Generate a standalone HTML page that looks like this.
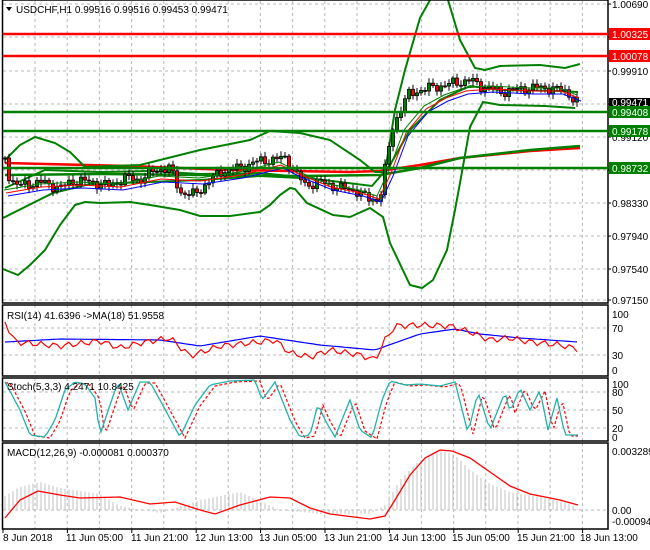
<!DOCTYPE html>
<html><head><meta charset="utf-8"><style>
body{margin:0;background:#fff;width:650px;height:550px;overflow:hidden;font-family:"Liberation Sans",sans-serif;}
svg{position:absolute;left:0;top:0}
text{font-family:"Liberation Sans",sans-serif;font-size:10px;fill:#000}
</style></head><body>
<svg id="s" width="650" height="550" viewBox="0 0 650 550" xmlns="http://www.w3.org/2000/svg">
<rect width="650" height="550" fill="#fff"/>
<g id="grid" stroke="#b8b8b8" stroke-dasharray="3,3" stroke-width="1"></g>
<g id="chart"></g>
<g fill="none" stroke="#000" stroke-width="1.5">
<rect x="2.5" y="0" width="605.5" height="303"/>
<rect x="2.5" y="305" width="605.5" height="71"/>
<rect x="2.5" y="378" width="605.5" height="63"/>
<rect x="2.5" y="443" width="605.5" height="86"/>
</g>
<g stroke-width="2.5">
<line x1="3" y1="34" x2="608" y2="34" stroke="#ff0000"/>
<line x1="3" y1="56" x2="608" y2="56" stroke="#ff0000"/>
<line x1="3" y1="112" x2="608" y2="112" stroke="#008000"/>
<line x1="3" y1="131" x2="608" y2="131" stroke="#008000"/>
<line x1="3" y1="168" x2="608" y2="168" stroke="#008000"/>
</g>
<g id="ticks" stroke="#000"></g>
<text x="612" y="8">1.00690</text>
<text x="612" y="75">0.99910</text>
<text x="612" y="141">0.99120</text>
<text x="612" y="207">0.98330</text>
<text x="612" y="240">0.97940</text>
<text x="612" y="273">0.97540</text>
<text x="612" y="304">0.97150</text>
<rect x="609" y="28" width="41" height="12" fill="#ff0000"/><text x="612" y="38" style="fill:#fff">1.00325</text>
<rect x="609" y="50" width="41" height="12" fill="#ff0000"/><text x="612" y="60" style="fill:#fff">1.00078</text>
<rect x="609" y="98" width="41" height="9" fill="#000"/><text x="612" y="106" style="fill:#fff">0.99471</text>
<rect x="609" y="106" width="41" height="12" fill="#008000"/><text x="612" y="116" style="fill:#fff">0.99408</text>
<rect x="609" y="125" width="41" height="12" fill="#008000"/><text x="612" y="135" style="fill:#fff">0.99178</text>
<rect x="609" y="162" width="41" height="12" fill="#008000"/><text x="612" y="172" style="fill:#fff">0.98732</text>
<text x="612" y="318">100</text><text x="612" y="332">70</text><text x="612" y="359">30</text><text x="612" y="374">0</text>
<text x="612" y="388">100</text><text x="612" y="396">80</text><text x="612" y="414">50</text><text x="612" y="432">20</text><text x="612" y="441">0</text>
<text x="612" y="455">0.003289</text><text x="612" y="514">0.00</text><text x="612" y="525">-0.00094</text>
<g font-size="10">
<text x="3" y="541">8 Jun 2018</text><text x="66" y="541">11 Jun 05:00</text><text x="131" y="541">11 Jun 21:00</text>
<text x="195" y="541">12 Jun 13:00</text><text x="259" y="541">13 Jun 05:00</text><text x="324" y="541">13 Jun 21:00</text>
<text x="388" y="541">14 Jun 13:00</text><text x="452" y="541">15 Jun 05:00</text><text x="517" y="541">15 Jun 21:00</text>
<text x="580" y="541">18 Jun 13:00</text>
</g>
<path d="M6 7 L12 7 L9 11 Z" fill="#000"/>
<text x="16" y="13">USDCHF,H1  0.99516 0.99516 0.99453 0.99471</text>
<text x="7" y="319">RSI(14) 41.6396  -&gt;MA(18) 51.9558</text>
<text x="7" y="390">Stoch(5,3,3) 4.2471 10.8425</text>
<text x="7" y="456">MACD(12,26,9) -0.000081 0.000370</text>
</svg>
<script>
var NS="http://www.w3.org/2000/svg";
function el(p,t,a){var e=document.createElementNS(NS,t);for(var k in a)e.setAttribute(k,a[k]);p.appendChild(e);return e;}
var grid=document.getElementById('grid'),ch=document.getElementById('chart'),tk=document.getElementById('ticks');
for(var x=35;x<608;x+=32.2){[[1,303],[305,376],[378,441],[443,529]].forEach(function(r){el(grid,'line',{x1:x,y1:r[0],x2:x,y2:r[1]});});}
for(var x=3;x<608;x+=64.4){el(tk,'line',{x1:x,y1:529,x2:x,y2:533});}
[4,37,71,104,137,170,203,236,269,300].forEach(function(y){el(grid,'line',{x1:3,y1:y,x2:608,y2:y});el(tk,'line',{x1:608,y1:y,x2:611,y2:y});});
[328,355].forEach(function(y){el(grid,'line',{x1:3,y1:y,x2:608,y2:y});});
[392,410,428].forEach(function(y){el(grid,'line',{x1:3,y1:y,x2:608,y2:y});});
el(grid,'line',{x1:3,y1:510,x2:608,y2:510});
function interp(pts,x){for(var i=0;i<pts.length-1;i++){if(x>=pts[i][0]&&x<=pts[i+1][0]){var t=(x-pts[i][0])/(pts[i+1][0]-pts[i][0]);return pts[i][1]+t*(pts[i+1][1]-pts[i][1]);}}return x<pts[0][0]?pts[0][1]:pts[pts.length-1][1];}
function line(pts,col,w,dash){var d=pts.map(function(p,i){return (i?'L':'M')+p[0].toFixed(1)+' '+p[1].toFixed(1);}).join('');var a={d:d,fill:'none',stroke:col,'stroke-width':w};if(dash)a['stroke-dasharray']=dash;el(ch,'path',a);}
line([[5,163],[130,166],[230,170],[350,172],[380,171],[420,165],[460,158],[530,151],[580,148]],'#ff0000',2.5);
line([[5,175],[100,174],[200,175],[300,176],[380,175],[420,168],[460,158],[530,150],[580,146]],'#008000',2.5);
line([[5,160],[20,145],[35,137],[55,143],[70,152],[85,167],[140,165],[200,150],[250,140],[270,131],[300,133],[330,140],[360,160],[375,172],[385,172],[395,110],[405,70],[420,18],[430,0]],'#008000',2);
line([[448,0],[460,40],[475,68],[485,70],[500,66],[540,65],[565,68],[580,64]],'#008000',2);
line([[3,269],[18,275],[30,265],[45,250],[60,225],[75,205],[85,202],[100,203],[130,202],[150,205],[180,210],[200,216],[230,216],[260,212],[270,205],[280,195],[290,188],[295,189],[307,203],[333,215],[350,217],[370,208],[383,217],[390,243],[410,285],[422,288],[433,280],[447,250],[455,210],[460,183],[470,127],[483,102],[500,105],[545,106],[575,108]],'#008000',2);
line([[3,218],[53,193],[90,184],[150,182],[200,180],[260,176],[300,178]],'#008000',2);
line([[5,188],[45,170],[100,172],[150,171],[200,174],[260,173],[300,177],[340,182],[372,186],[390,165],[410,130],[440,100],[470,86],[500,90],[560,91],[578,92]],'#008000',2);
var P=[[5,158],[10,180],[20,186],[40,182],[60,188],[75,180],[90,182],[110,186],[125,178],[140,180],[155,170],[170,168],[180,192],[195,195],[210,180],[225,170],[240,168],[255,162],[270,160],[285,158],[295,172],[305,185],[320,182],[340,188],[355,190],[370,200],[380,198],[385,170],[392,130],[400,110],[408,95],[420,90],[440,86],[460,82],[470,80],[480,86],[490,88],[500,92],[515,90],[530,88],[545,88],[560,90],[568,92],[575,102],[580,103]];
var prev=interp(P,5);
for(var i=0;i<144;i++){var x=5+i*4;var c=interp(P,x)+6*Math.sin(i*1.7)*Math.cos(i*0.53);
 var o=prev;var hi=Math.min(o,c)-2-3*Math.abs(Math.sin(i*2.3)),lo=Math.max(o,c)+2+3*Math.abs(Math.cos(i*1.1));
 el(ch,'line',{x1:x,y1:hi,x2:x,y2:lo,stroke:'#000','stroke-width':1});
 var t=Math.min(o,c),h=Math.max(Math.abs(c-o),1);
 el(ch,'rect',{x:x-1.5,y:t,width:3,height:h,fill:c<o?'#008000':'#ff0000',stroke:'#000','stroke-width':0.8});
 prev=c;}
var ma=[[5,190],[40,184],[80,182],[120,184],[160,176],[200,178],[240,172],[280,162],[300,172],[330,184],[360,190],[378,196],[390,170],[405,130],[425,106],[445,95],[465,88],[490,86],[530,88],[560,88],[578,95]];
function off(pts,dx,dy){return pts.map(function(p){return [p[0]+dx,p[1]+dy];});}
line(off(ma,3,6),'#0000ff',1);line(off(ma,1,3),'#ff0000',1);line(off(ma,-1,0),'#008000',1);
var r=[],rm=[];for(var i=0;i<144;i++){var x=5+i*4;var v=interp([[5,322],[15,342],[60,346],[100,341],[120,348],[140,343],[170,338],[190,356],[220,346],[260,342],[275,340],[290,353],[310,357],[330,350],[360,355],[375,360],[385,340],[395,326],[420,325],[450,326],[470,332],[490,340],[510,338],[530,342],[560,345],[578,349]],x)+3*Math.sin(i*1.9);r.push([x,v]);rm.push([x,interp([[5,342],[60,339],[160,340],[200,346],[260,336],[320,345],[375,350],[420,334],[455,329],[480,334],[520,338],[578,342]],x)]);}
line(rm,'#0000ff',1.2);line(r,'#ff0000',1.2);
var sp=[[5,382],[20,410],[30,435],[45,437],[55,420],[65,390],[75,382],[85,384],[95,398],[100,435],[110,405],[118,382],[128,410],[140,382],[150,382],[160,400],[180,437],[195,405],[210,385],[230,381],[255,380],[262,400],[275,382],[290,420],[300,437],[310,435],[318,404],[325,420],[335,437],[350,400],[360,430],[372,438],[382,400],[390,381],[405,385],[420,384],[440,386],[455,382],[468,433],[478,392],[490,430],[505,392],[510,412],[520,388],[530,410],[540,390],[548,430],[557,398],[565,435],[575,435]];
var st=[],sd=[];for(var x=5;x<=578;x+=3){st.push([x,interp(sp,x)]);sd.push([x,Math.min(440,interp(sp,x-5)+1)]);}
line(sd,'#ff0000',1.2,'3,2');line(st,'#20b2aa',1.3);
var hp=[[5,496],[20,487],[40,482],[60,488],[100,494],[120,506],[160,513],[200,500],[240,492],[280,510],[320,514],[370,514],[385,505],[400,480],[420,460],[440,450],[455,455],[470,470],[490,484],[510,492],[540,497],[570,504],[578,510]];
for(var x=5;x<=578;x+=4){var y=interp(hp,x);el(ch,'line',{x1:x,y1:510,x2:x,y2:y,stroke:'#c0c0c0','stroke-width':1});}
line([[5,518],[20,500],[38,491],[60,495],[80,498],[120,497],[150,504],[175,502],[200,510],[215,514],[240,505],[270,497],[290,498],[310,508],[330,514],[370,519],[385,516],[395,500],[410,475],[425,458],[440,450],[452,451],[470,458],[490,472],[510,486],[530,494],[560,500],[578,505]],'#ff0000',1.3);
</script>
</body></html>
